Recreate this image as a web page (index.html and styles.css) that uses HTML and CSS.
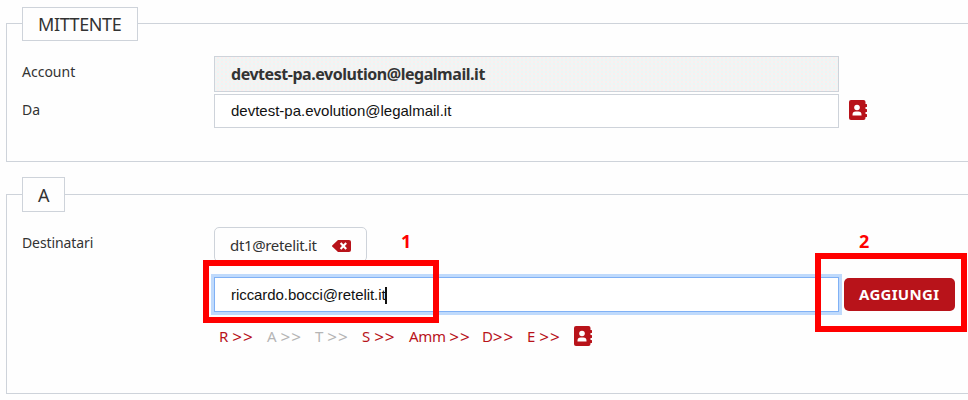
FILE: index.html
```html
<!DOCTYPE html>
<html lang="it">
<head>
<meta charset="utf-8">
<title>Nuovo messaggio</title>
<link rel="stylesheet" href="styles.css">
</head>
<body>
<svg class="defs" width="0" height="0">
  <symbol id="book" viewBox="0 0 18 20">
    <path fill="#b8131a" d="M2 0h12.500q2 0 2 2v16q0 2-2 2H2q-2 0-2-2V2q0-2 2-2z"/>
    <path fill="#b8131a" d="M17 4h.4q.6 0 .6.6v1.800q0 .6-.6.6H17zM17 9h.4q.6 0 .6.6v1.800q0 .6-.6.6H17zM17 14h.4q.6 0 .6.6v1.800q0 .6-.6.6H17z"/>
    <path fill="#b8131a" d="M16 4h1v3h-1zM16 9h1v3h-1zM16 14h1v3h-1z"/>
    <circle cx="8" cy="7.500" r="2.800" fill="#fff"/>
    <path fill="#fff" d="M3.500 15.500v-.7q0-3.200 3.200-3.200h2.600q3.200 0 3.200 3.200v.7z"/>
  </symbol>
</svg>
<main class="page">
  <section class="group sender">
    <h2 class="legend">MITTENTE</h2>
    <div class="row">
      <span class="label">Account</span>
      <div class="field account"><span>devtest-pa.evolution@legalmail.it</span></div>
    </div>
    <div class="row">
      <span class="label">Da</span>
      <div class="field from"><span>devtest-pa.evolution@legalmail.it</span></div>
      <svg class="book"><use href="#book"/></svg>
    </div>
  </section>
  <section class="group recipients">
    <h2 class="legend">A</h2>
    <div class="row">
      <span class="label dest">Destinatari</span>
      <div class="chip"><span class="chip-text">dt1@retelit.it</span>
        <svg class="remove" viewBox="0 0 19 12"><path fill="#b8131a" d="M6 0h11q2 0 2 2v8q0 2-2 2H6L.4 6.8q-.7-.8 0-1.6z"/><path stroke="#fff" stroke-width="2.1" d="M8.600 3l5.600 6M14.200 3l-5.600 6"/></svg>
      </div>
    </div>
    <div class="row entry">
      <div class="field input"><span>riccardo.bocci@retelit.it</span><i class="caret"></i></div>
      <div class="button"><span>AGGIUNGI</span></div>
    </div>
    <div class="links">
      <a class="l1">R <i>&gt;&gt;</i></a><a class="l2 off">A <i>&gt;&gt;</i></a><a class="l3 off">T <i>&gt;&gt;</i></a><a class="l4">S <i>&gt;&gt;</i></a><a class="l5">Amm <i>&gt;&gt;</i></a><a class="l6">D<i>&gt;&gt;</i></a><a class="l7">E <i>&gt;&gt;</i></a>
      <svg class="book"><use href="#book"/></svg>
    </div>
  </section>
  <div class="mark mark1"></div><b class="num num1">1</b>
  <div class="mark mark2"></div><b class="num num2">2</b>
</main>
</body>
</html>
```
FILE: styles.css
```css
* { box-sizing: border-box; }
body { margin: 0; background: #fefefe; color: #333; font: 14px/20px "Noto Sans", sans-serif; }
.defs { position: absolute; }
.page { position: relative; width: 968px; height: 400px; overflow: hidden; padding: 23px 0 0 6px; }
.group { border: 1px solid #ced3da; border-right: 0; padding-left: 15px; }
.sender { height: 139px; margin-bottom: 32px; }
.recipients { height: 200px; }
.legend { width: 116px; height: 34px; margin: -17px 0 15px; border: 1px solid #ced3da; background: #fefefe; padding-left: 15px; font-size: 18px; font-weight: 400; line-height: 33px; letter-spacing: -0.4px; }
.recipients .legend { width: 43px; height: 35px; margin: -18px 0 15px; line-height: 35px; }
.row { display: flex; align-items: flex-start; }
.label { width: 192px; padding-top: 6px; }
.dest { letter-spacing: -0.1px; }
.field { width: 625px; height: 34px; border: 1px solid #ced3da; padding-left: 16px; background: #fff; color: #111; font: 15px/32px "Liberation Sans", sans-serif; }
.account { height: 36px; margin-bottom: 2px; background: conic-gradient(#fbeeee 25%, #e9f7f6 0 50%, #f6f2f1 0 75%, #eff6f6 0) 0 0 / 4px 4px; color: #333; font: bold 16px/35px "Noto Sans", sans-serif; letter-spacing: -0.46px; }
.row .book { margin: 6px 0 0 10px; }
.book { width: 18px; height: 20px; flex: none; }
.chip { display: flex; width: 153px; height: 35px; border: 1px solid #ced3da; border-radius: 5px; padding-left: 15px; font-size: 15px; line-height: 35px; letter-spacing: -0.35px; }
.chip-text { width: 102px; }
.remove { width: 19px; height: 12px; margin-top: 12px; }
.entry { margin: 15px 0 0 192px; }
.input { height: 35px; line-height: 33px; letter-spacing: -0.06px; border-color: #80b1f5; box-shadow: 0 0 0 3px #bfdafc; }
.caret { display: inline-block; width: 2px; height: 17px; margin-left: -1px; background: #111; vertical-align: -4px; }
.button { width: 111px; height: 33px; margin: 1px 0 0 5px; border-radius: 5px; background: #b8131a; color: #fff; padding-left: 15px; font-weight: 700; font-size: 15px; line-height: 33px; letter-spacing: 0.3px; }
.links { display: flex; margin: 14px 0 0 197px; color: #b8131a; font-size: 15px; }
.links a { flex: none; white-space: nowrap; }
.links i { font-style: normal; font-size: 17px; line-height: 1; letter-spacing: 1px; vertical-align: -1px; }
.links .off { color: #b5b5b5; }
.l1 { width: 48px; } .l2 { width: 48px; } .l3 { width: 47px; } .l4 { width: 47px; } .l5 { width: 73px; } .l6 { width: 45px; } .l7 { width: 47px; }
.l5, .l6 { letter-spacing: -0.3px; }
.mark { position: absolute; border: 6px solid #f00; }
.mark1 { left: 203px; top: 260px; width: 236px; height: 63px; }
.mark2 { left: 815px; top: 253px; width: 152px; height: 79px; }
.num { position: absolute; top: 231px; color: #f00; font-size: 18px; }
.num1 { left: 401px; } .num2 { left: 859px; }
```
